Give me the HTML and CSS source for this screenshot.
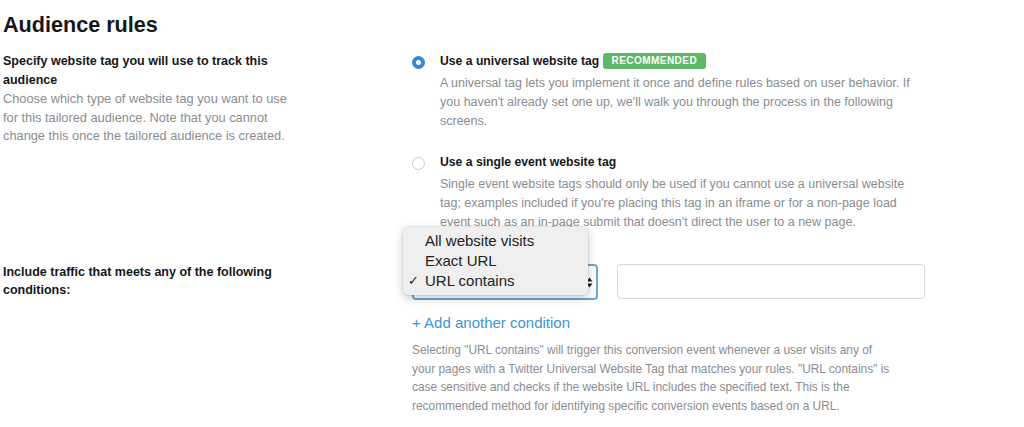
FILE: index.html
```html
<!DOCTYPE html>
<html lang="en">
<head>
<meta charset="UTF-8">
<meta name="viewport" content="width=device-width, initial-scale=1.0">
<title>Audience rules</title>
<link rel="stylesheet" href="styles.css">
</head>
<body>

<main class="page">
  <h1>Audience rules</h1>

  <!-- Website tag choice -->
  <section class="rule-row">
    <div class="rule-label">
      <h2>Specify website tag you will use to track this audience</h2>
      <p>Choose which type of website tag you want to use for this tailored audience. Note that you cannot change this once the tailored audience is created.</p>
    </div>
    <div class="rule-body">
      <div class="option">
        <span class="radio checked"></span>
        <div class="option-text">
          <div class="option-title">Use a universal website tag <span class="badge">RECOMMENDED</span></div>
          <p>A universal tag lets you implement it once and define rules based on user behavior. If you haven't already set one up, we'll walk you through the process in the following screens.</p>
        </div>
      </div>
      <div class="option">
        <span class="radio"></span>
        <div class="option-text">
          <div class="option-title">Use a single event website tag</div>
          <p>Single event website tags should only be used if you cannot use a universal website tag; examples included if you're placing this tag in an iframe or for a non-page load event such as an in-page submit that doesn't direct the user to a new page.</p>
        </div>
      </div>
    </div>
  </section>

  <!-- Conditions -->
  <section class="rule-row conditions">
    <div class="rule-label">
      <h2>Include traffic that meets any of the following conditions:</h2>
    </div>
    <div class="rule-body">
      <div class="condition">
        <div class="select">
          <span class="select-arrows">
            <svg width="7" height="11" viewBox="0 0 7 11"><path d="M3.5 0.5 L6.5 4.5 H0.5 Z M3.5 10.5 L0.5 6.5 H6.5 Z" fill="#222"/></svg>
          </span>
          <ul class="menu">
            <li>All website visits</li>
            <li>Exact URL</li>
            <li class="selected">URL contains</li>
          </ul>
        </div>
        <input class="text-input" type="text">
      </div>
      <a class="add-link" href="#">+ Add another condition</a>
      <p class="help">Selecting "URL contains" will trigger this conversion event whenever a user visits any of your pages with a Twitter Universal Website Tag that matches your rules. "URL contains" is case sensitive and checks if the website URL includes the specified text. This is the recommended method for identifying specific conversion events based on a URL.</p>
    </div>
  </section>
</main>

</body>
</html>
```

FILE: styles.css
```css
body {
  margin: 0;
  background-color: #fff;
  color: #14171a;
  font-family: "Liberation Sans", Arial, sans-serif;
}

.page {
  padding: 12px 3px 0;
}

h1 {
  margin: 0 0 14px;
  font-size: 21.6px;
  line-height: 26px;
  font-weight: bold;
}

/* Two column rows */
.rule-row {
  display: grid;
  grid-template-columns: 300px 513px;
  column-gap: 109px;
}

.conditions {
  margin-top: 32px;
}

.rule-label h2 {
  margin: 0;
  font-size: 12.5px;
  line-height: 18.5px;
  font-weight: bold;
}

.conditions .rule-label h2 {
  margin-top: -1px;
  line-height: 18px;
}

.rule-label p {
  margin: 1px 0 0;
  font-size: 12.8px;
  line-height: 18.5px;
  color: #8a8d91;
  width: 295px;
}

/* Radio options */
.option {
  display: flex;
  gap: 15px;
}

.option + .option {
  margin-top: 22px;
}

.radio {
  flex: none;
  box-sizing: border-box;
  width: 13px;
  height: 13px;
  margin-top: 4px;
  border: 1px solid #c8cacc;
  border-radius: 50%;
  background: #fff;
}

.radio.checked {
  border: 4.5px solid #3a86d8;
  background: #fff;
}

.option-text {
  width: 485px;
}

.option-title {
  font-size: 12.2px;
  line-height: 19px;
  font-weight: bold;
}

.badge {
  display: inline-block;
  margin-left: 0;
  padding: 0 9px;
  height: 16px;
  line-height: 16px;
  border-radius: 3px;
  background-color: #5db867;
  color: #fff;
  font-size: 10px;
  letter-spacing: 0.45px;
  vertical-align: 1px;
}

.option-text p {
  margin: 3px 0 0;
  font-size: 12.5px;
  line-height: 19px;
  color: #8a8d91;
}

/* Condition row */
.condition {
  display: flex;
  gap: 19px;
}

.select {
  position: relative;
  box-sizing: border-box;
  width: 186px;
  height: 36px;
  border: 2px solid #6ea6d8;
  border-radius: 4px;
  background: #fff;
}

.select-arrows {
  position: absolute;
  right: 3px;
  top: 11px;
  line-height: 0;
}

/* Open native-style popup menu */
.menu {
  position: absolute;
  left: -11px;
  top: -39px;
  width: 185px;
  margin: 0;
  padding: 4px 0 4px;
  list-style: none;
  background: #efefef;
  border-radius: 5px;
  box-shadow: 0 3px 10px rgba(0, 0, 0, 0.22), 0 0 0 1px rgba(0, 0, 0, 0.06);
  font-size: 15px;
  line-height: 20px;
  color: #222;
}

.menu li {
  padding-left: 22px;
  position: relative;
}

.menu li.selected::before {
  content: "\2713";
  position: absolute;
  left: 5px;
  font-size: 13px;
}

.text-input {
  box-sizing: border-box;
  width: 308px;
  height: 35px;
  margin: 0;
  border: 1px solid #d4d6d8;
  border-radius: 4px;
  background: #fff;
}

.add-link {
  display: block;
  margin-top: 13px;
  font-size: 15px;
  line-height: 20px;
  color: #3d95d6;
  text-decoration: none;
}

.help {
  margin: 8px 0 0;
  width: 481px;
  font-size: 11.9px;
  line-height: 18.5px;
  color: #8a8d91;
}
```
